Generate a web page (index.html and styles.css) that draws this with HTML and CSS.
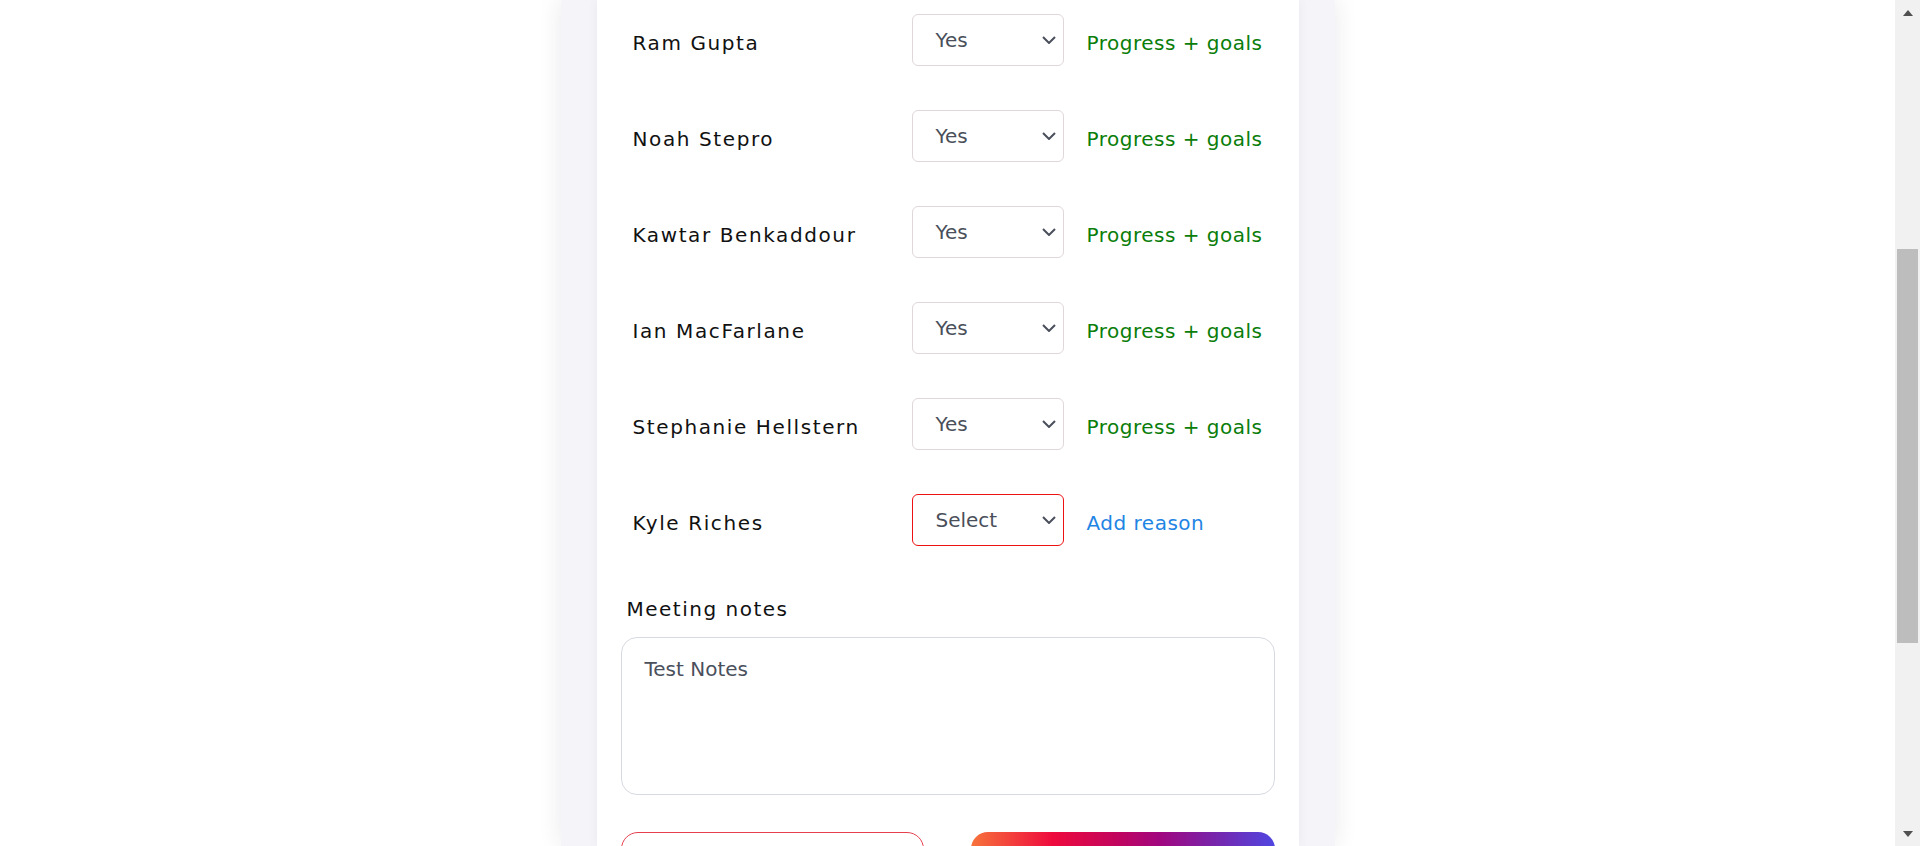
FILE: index.html
```html
<!DOCTYPE html>
<html lang="en">
<head>
<meta charset="utf-8">
<title>Meeting attendance</title>
<link rel="stylesheet" href="styles.css">
</head>
<body>
<div class="page">
  <div class="main">
    <div class="outer">
      <div class="card">
        <div class="row">
          <span class="name">Ram Gupta</span>
          <div class="select"><span>Yes</span><svg class="chev" viewBox="0 0 14 8" width="14" height="8"><path d="M1 1l6 6 6-6"/></svg></div>
          <a class="link green">Progress + goals</a>
        </div>
        <div class="row">
          <span class="name">Noah Stepro</span>
          <div class="select"><span>Yes</span><svg class="chev" viewBox="0 0 14 8" width="14" height="8"><path d="M1 1l6 6 6-6"/></svg></div>
          <a class="link green">Progress + goals</a>
        </div>
        <div class="row">
          <span class="name">Kawtar Benkaddour</span>
          <div class="select"><span>Yes</span><svg class="chev" viewBox="0 0 14 8" width="14" height="8"><path d="M1 1l6 6 6-6"/></svg></div>
          <a class="link green">Progress + goals</a>
        </div>
        <div class="row">
          <span class="name">Ian MacFarlane</span>
          <div class="select"><span>Yes</span><svg class="chev" viewBox="0 0 14 8" width="14" height="8"><path d="M1 1l6 6 6-6"/></svg></div>
          <a class="link green">Progress + goals</a>
        </div>
        <div class="row">
          <span class="name">Stephanie Hellstern</span>
          <div class="select"><span>Yes</span><svg class="chev" viewBox="0 0 14 8" width="14" height="8"><path d="M1 1l6 6 6-6"/></svg></div>
          <a class="link green">Progress + goals</a>
        </div>
        <div class="row">
          <span class="name">Kyle Riches</span>
          <div class="select invalid"><span>Select</span><svg class="chev" viewBox="0 0 14 8" width="14" height="8"><path d="M1 1l6 6 6-6"/></svg></div>
          <a class="link blue">Add reason</a>
        </div>
        <div class="notes-label">Meeting notes</div>
        <div class="notes">Test Notes</div>
        <div class="buttons">
          <div class="btn btn-outline"></div>
          <div class="btn btn-grad"></div>
        </div>
      </div>
    </div>
  </div>
  <div class="scrollbar">
    <div class="arrow"><svg viewBox="0 0 10 6" width="10" height="6"><path d="M0 6L5 0L10 6Z"/></svg></div>
    <div class="track"><div class="thumb"></div></div>
    <div class="arrow down"><svg viewBox="0 0 10 6" width="10" height="6"><path d="M0 0L10 0L5 6Z"/></svg></div>
  </div>
</div>
</body>
</html>
```
FILE: styles.css
```css
* { box-sizing: border-box; }
html, body { margin: 0; padding: 0; height: 846px; overflow: hidden; background: #fff; }
body { font-family: "DejaVu Sans", "Noto Sans", sans-serif; color: #111; }

.page { display: flex; height: 846px; }
.main { flex: 1; display: flex; justify-content: center; overflow: hidden; }
.outer {
  width: 774px;
  height: 846px;
  padding: 0 36px;
  background: #f5f5f9;
  box-shadow: 0 0 22px rgba(40, 40, 70, 0.10);
}
.card {
  height: 100%;
  background: #fff;
  padding: 14px 24px 0;
  box-shadow: 0 0 10px rgba(40, 40, 80, 0.07);
}

.row {
  display: flex;
  align-items: center;
  height: 52px;
  margin-bottom: 44px;
  padding-left: 12px;
}
.name {
  width: 279px;
  flex: none;
  font-size: 20px;
  letter-spacing: 1.6px;
  color: #111;
  padding-top: 6px;
}
.select {
  width: 152px;
  height: 52px;
  flex: none;
  border: 1px solid #e0d7db;
  border-radius: 6px;
  display: flex;
  align-items: center;
  justify-content: space-between;
  padding: 0 7px 0 23px;
  font-size: 20px;
  color: #4a4f5a;
}
.select span { margin-top: -1px; }
.select.invalid { border-color: #ee1111; }
.chev { fill: none; stroke: #4a4f5a; stroke-width: 2; }
.link {
  margin-left: 23px;
  font-size: 20px;
  letter-spacing: 0.5px;
  padding-top: 6px;
  white-space: nowrap;
}
.green { color: #0a7d0a; }
.blue { color: #1f85e4; }

.notes-label {
  font-size: 20px;
  letter-spacing: 1.5px;
  padding-top: 4px;
  margin: 0 0 13px 6px;
  line-height: 30px;
  color: #111;
}
.notes {
  height: 158px;
  border: 1px solid #d6d9df;
  border-radius: 16px;
  padding: 19px 23px;
  font-size: 20px;
  color: #4a505c;
}
.buttons {
  display: grid;
  grid-template-columns: 303px 304px;
  justify-content: space-between;
  margin-top: 37px;
}
.btn { height: 56px; border-radius: 17px; }
.btn-outline { border: 1px solid #e6404f; background: #fff; }
.btn-grad { background: linear-gradient(90deg, #f7733b 0%, #ee0a3d 27%, #c1045e 48%, #a1067f 62%, #7c22a6 78%, #5046e1 100%); }

.scrollbar {
  width: 25px;
  flex: none;
  background: #f1f1f1;
  display: flex;
  flex-direction: column;
}
.arrow { height: 25px; display: flex; justify-content: center; align-items: center; }
.arrow svg { fill: #505050; }
.track { flex: 1; }
.thumb { margin: 224px 2px 0; height: 394px; background: #bdbdbd; }
```
